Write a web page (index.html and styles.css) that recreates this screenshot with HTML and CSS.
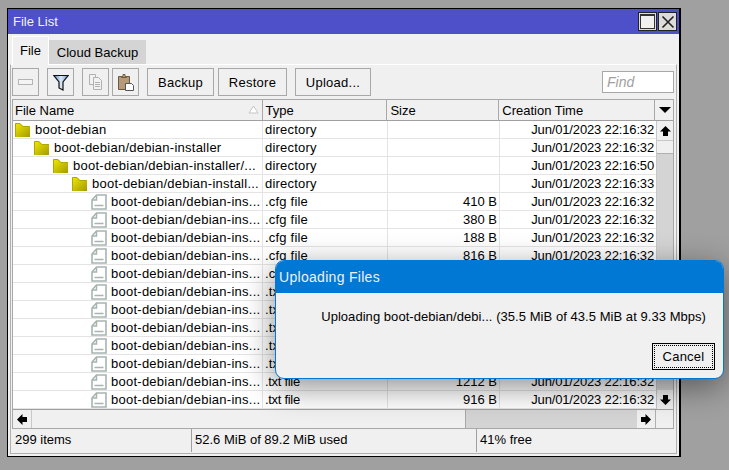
FILE: index.html
```html
<!DOCTYPE html>
<html>
<head>
<meta charset="utf-8">
<title>File List</title>
<link rel="stylesheet" href="styles.css">
</head>
<body>
<svg width="0" height="0" class="defs">
	<defs>
		<linearGradient id="fold" x1="0" y1="0" x2="1" y2="1">
			<stop offset="0" stop-color="#f2ea00"/>
			<stop offset="1" stop-color="#a39a00"/>
		</linearGradient>
		<linearGradient id="funnel" x1="0" y1="0" x2="1" y2="0">
			<stop offset="0" stop-color="#4f86c8"/>
			<stop offset=".5" stop-color="#dfeaf6"/>
			<stop offset="1" stop-color="#5f93d0"/>
		</linearGradient>
		<symbol id="folder" viewBox="0 0 16 16">
			<path d="M0 1h5l3 3h7v11H0z" fill="url(#fold)"/>
			<path d="M.5 15V1.500h4.300l3 3h7" fill="none" stroke="#b0a600"/>
		</symbol>
		<symbol id="file" viewBox="0 0 16 16">
			<path d="M5.500 1h9.500v14H1V6z" fill="#fff" stroke="#a6b5b1" stroke-width="1.600"/>
			<path d="M5.500 1v5H1M3.500 11.500h9" fill="none" stroke="#a6b5b1" stroke-width="1.500"/>
		</symbol>
	</defs>
</svg>
<div class="window">
	<div class="titlebar">
		<span class="title">File List</span>
		<span class="winbtn"><span class="maxbox"></span></span>
		<span class="winbtn">
			<svg width="14" height="14" viewBox="0 0 14 14"><path d="M1.500 1.500l11 11M12.500 1.500l-11 11" stroke="#222" stroke-width="1.600"/></svg>
		</span>
	</div>
	<div class="tabs">
		<div class="tab active">File</div>
		<div class="tab">Cloud Backup</div>
	</div>
	<div class="panel">
		<div class="toolbar">
			<button class="tool">
				<svg width="15" height="7" viewBox="0 0 15 7"><rect x=".5" y=".5" width="14" height="5" fill="#f4f4f4" stroke="#b4b4b4"/></svg>
			</button>
			<button class="tool gap">
				<svg width="16" height="17" viewBox="0 0 16 17"><path d="M.8 1.500h14.400L10 8v8l-4-2V8z" fill="url(#funnel)" stroke="#111" stroke-width="1.200"/></svg>
			</button>
			<button class="tool gap">
				<svg width="16" height="16" viewBox="0 0 16 16" fill="#f2f2f2" stroke="#b0b0b0"><path d="M1.500 .5h6v10h-6z"/><path d="M5.500 3.500h5l3 3v9h-8z"/><path d="M7 8.500h5M7 10.500h5M7 12.500h5"/></svg>
			</button>
			<button class="tool">
				<svg width="16" height="17" viewBox="0 0 16 17"><path d="M.5 2.500h11v13H.5z" fill="#b79a78" stroke="#6b5a48"/><path d="M3.500 3.500v-1h1.500v-2h2v2h1.500v1z" fill="#e0b050" stroke="#6b5a48"/><path d="M7.500 9.500h6l2 2v5h-8z" fill="#fff" stroke="#555"/></svg>
			</button>
			<button class="tool text gap">Backup</button>
			<button class="tool text restore">Restore</button>
			<button class="tool text upload">Upload...</button>
			<div class="find">Find</div>
		</div>
		<div class="grid">
			<div class="head">
				<div class="hcell c-name">File Name<svg class="sort" width="11" height="9" viewBox="0 0 11 9"><path d="M5.500 1l4.500 7H1z" fill="#fff" stroke="#c4c4c4"/></svg></div>
				<div class="hcell c-type">Type</div>
				<div class="hcell c-size">Size</div>
				<div class="hcell c-time">Creation Time</div>
				<div class="hcell c-menu"><span class="tri-down"></span></div>
			</div>
			<div class="body">
				<div class="rows">
					<div class="row"><div class="c-name l0"><svg class="ic"><use href="#folder"/></svg>boot-debian</div><div class="c-type">directory</div><div class="c-size"></div><div class="c-time">Jun/01/2023 22:16:32</div></div>
					<div class="row"><div class="c-name l1"><svg class="ic"><use href="#folder"/></svg>boot-debian/debian-installer</div><div class="c-type">directory</div><div class="c-size"></div><div class="c-time">Jun/01/2023 22:16:32</div></div>
					<div class="row"><div class="c-name l2"><svg class="ic"><use href="#folder"/></svg>boot-debian/debian-installer/...</div><div class="c-type">directory</div><div class="c-size"></div><div class="c-time">Jun/01/2023 22:16:50</div></div>
					<div class="row"><div class="c-name l3"><svg class="ic"><use href="#folder"/></svg>boot-debian/debian-install...</div><div class="c-type">directory</div><div class="c-size"></div><div class="c-time">Jun/01/2023 22:16:33</div></div>
					<div class="row"><div class="c-name l4"><svg class="ic"><use href="#file"/></svg>boot-debian/debian-ins...</div><div class="c-type">.cfg file</div><div class="c-size">410 B</div><div class="c-time">Jun/01/2023 22:16:32</div></div>
					<div class="row"><div class="c-name l4"><svg class="ic"><use href="#file"/></svg>boot-debian/debian-ins...</div><div class="c-type">.cfg file</div><div class="c-size">380 B</div><div class="c-time">Jun/01/2023 22:16:32</div></div>
					<div class="row"><div class="c-name l4"><svg class="ic"><use href="#file"/></svg>boot-debian/debian-ins...</div><div class="c-type">.cfg file</div><div class="c-size">188 B</div><div class="c-time">Jun/01/2023 22:16:32</div></div>
					<div class="row"><div class="c-name l4"><svg class="ic"><use href="#file"/></svg>boot-debian/debian-ins...</div><div class="c-type">.cfg file</div><div class="c-size">816 B</div><div class="c-time">Jun/01/2023 22:16:32</div></div>
					<div class="row"><div class="c-name l4"><svg class="ic"><use href="#file"/></svg>boot-debian/debian-ins...</div><div class="c-type cut">.c</div><div class="c-size"></div><div class="c-time"></div></div>
					<div class="row"><div class="c-name l4"><svg class="ic"><use href="#file"/></svg>boot-debian/debian-ins...</div><div class="c-type cut">.tx</div><div class="c-size"></div><div class="c-time"></div></div>
					<div class="row"><div class="c-name l4"><svg class="ic"><use href="#file"/></svg>boot-debian/debian-ins...</div><div class="c-type cut">.tx</div><div class="c-size"></div><div class="c-time"></div></div>
					<div class="row"><div class="c-name l4"><svg class="ic"><use href="#file"/></svg>boot-debian/debian-ins...</div><div class="c-type cut">.tx</div><div class="c-size"></div><div class="c-time"></div></div>
					<div class="row"><div class="c-name l4"><svg class="ic"><use href="#file"/></svg>boot-debian/debian-ins...</div><div class="c-type cut">.tx</div><div class="c-size"></div><div class="c-time"></div></div>
					<div class="row"><div class="c-name l4"><svg class="ic"><use href="#file"/></svg>boot-debian/debian-ins...</div><div class="c-type cut">.tx</div><div class="c-size"></div><div class="c-time"></div></div>
					<div class="row"><div class="c-name l4"><svg class="ic"><use href="#file"/></svg>boot-debian/debian-ins...</div><div class="c-type tight">.txt file</div><div class="c-size">1212 B</div><div class="c-time">Jun/01/2023 22:16:32</div></div>
					<div class="row"><div class="c-name l4"><svg class="ic"><use href="#file"/></svg>boot-debian/debian-ins...</div><div class="c-type tight">.txt file</div><div class="c-size">916 B</div><div class="c-time">Jun/01/2023 22:16:32</div></div>
				</div>
				<div class="vscroll">
					<div class="arrow">
						<svg width="11" height="10" viewBox="0 0 11 10"><path d="M5.500 0l5.500 5.500H8V10H3V5.500H0z" fill="#000"/></svg>
					</div>
					<div class="vthumb"></div>
					<div class="vtrack"></div>
					<div class="arrow">
						<svg width="11" height="10" viewBox="0 0 11 10"><path d="M5.500 10L11 4.500H8V0H3v4.500H0z" fill="#000"/></svg>
					</div>
				</div>
			</div>
			<div class="hscroll">
				<div class="arrow wide">
					<svg width="10" height="11" viewBox="0 0 10 11"><path d="M0 5.500L5.500 0v3H10v5H5.500v3z" fill="#000"/></svg>
				</div>
				<div class="hthumb"></div>
				<div class="htrack"></div>
				<div class="arrow wide">
					<svg width="10" height="11" viewBox="0 0 10 11"><path d="M10 5.500L4.500 0v3H0v5h4.500v3z" fill="#000"/></svg>
				</div>
				<div class="corner"></div>
			</div>
		</div>
		<div class="status">
			<div class="st st1">299 items</div>
			<div class="st st2">52.6 MiB of 89.2 MiB used</div>
			<div class="st st3">41% free</div>
		</div>
	</div>
</div>

<div class="dialog">
	<div class="dlg-title">Uploading Files</div>
	<div class="dlg-body">
		<div class="dlg-msg">Uploading boot-debian/debi... (35.5 MiB of 43.5 MiB at 9.33 Mbps)</div>
		<div class="dlg-foot"><button class="cancel"><span>Cancel</span></button></div>
	</div>
</div>
</body>
</html>
```

FILE: styles.css
```css
html, body {
	margin: 0;
	height: 470px;
	overflow: hidden;
}
body {
	background-color: #a0a0a0;
	font-family: "Liberation Sans", Arial, sans-serif;
	font-size: 13px;
	color: #000;
	padding: 8px 0 0 7px;
	box-sizing: border-box;
}
.defs {
	display: block;
	height: 0;
}
button {
	font: inherit;
	color: inherit;
	padding: 0;
}

.window {
	width: 674px;
	height: 449px;
	box-sizing: border-box;
	border: 1px solid #000;
	border-width: 1px 2px 1px 1px;
	background-color: #f0f0f0;
	display: flex;
	flex-direction: column;
}

.titlebar {
	height: 25px;
	background-color: #4d50c9;
	color: #f0f0f0;
	display: flex;
	align-items: center;
	padding: 0 2px 0 5px;
	gap: 1px;
	flex: none;
}
.title {
	flex: 1;
}
.winbtn {
	width: 19px;
	height: 19px;
	box-sizing: border-box;
	border: 1px solid #222;
	background-color: #dcdcdc;
	display: flex;
	align-items: center;
	justify-content: center;
}
.maxbox {
	width: 15px;
	height: 15px;
	box-sizing: border-box;
	border: 1px solid #333;
	border-top-width: 2px;
	background-color: #f0f0f0;
}

.tabs {
	height: 30px;
	padding-left: 4px;
	display: flex;
	align-items: flex-end;
	flex: none;
}
.tab {
	height: 24px;
	line-height: 26px;
	width: 97px;
	text-align: center;
	background-color: #d4d4d4;
	letter-spacing: 0.05px;
}
.tab.active {
	height: 29px;
	line-height: 27px;
	width: 37px;
	background-color: #f0f0f0;
	border: 1px solid #fff;
	border-bottom: none;
	box-sizing: border-box;
	margin-bottom: -1px;
	position: relative;
}

.panel {
	flex: 1;
	margin: 0 2px 2px 2px;
	border: 1px solid #b0b0b0;
	border-top-color: #fff;
	display: flex;
	flex-direction: column;
}

.toolbar {
	height: 28px;
	margin-top: 3px;
	padding: 0 2px 0 1px;
	display: flex;
	align-items: flex-start;
	gap: 3px;
	flex: none;
}
.tool {
	width: 27px;
	height: 28px;
	box-sizing: border-box;
	background-color: #f0f0f0;
	border: 1px solid #a8a8a8;
	display: flex;
	align-items: center;
	justify-content: center;
}
.tool.gap {
	margin-left: 5px;
}
.tool.text {
	width: 67px;
	letter-spacing: 0.25px;
}
.tool.restore {
	width: 69px;
	margin-left: 1px;
}
.tool.upload {
	width: 76px;
	margin-left: 5px;
}
.find {
	margin: 3px 0 0 auto;
	width: 72px;
	height: 22px;
	box-sizing: border-box;
	border: 1px solid #a8a8a8;
	background-color: #fff;
	color: #a0a0a0;
	font-style: italic;
	font-size: 14px;
	line-height: 20px;
	padding-left: 4px;
}

.grid {
	margin: 3px 2px 0 1px;
	border: 1px solid #a8a8a8;
	flex: none;
}
.head {
	display: flex;
	height: 20px;
	border-bottom: 1px solid #a0a0a0;
}
.c-name { width: 250px; }
.c-type { width: 125px; }
.c-size { width: 112px; }
.c-time { width: 156px; }
.c-menu { width: 18px; }
.hcell {
	box-sizing: border-box;
	line-height: 21px;
	padding-left: 2px;
	border-right: 1px solid #a8a8a8;
	position: relative;
}
.hcell.c-type, .hcell.c-size, .hcell.c-time {
	padding-left: 3px;
}
.hcell.c-menu {
	border-right: none;
	display: flex;
	align-items: center;
	justify-content: center;
}
.sort {
	position: absolute;
	right: 3px;
	top: 5px;
}
.tri-down {
	border-left: 6px solid transparent;
	border-right: 6px solid transparent;
	border-top: 6px solid #000;
}

.body {
	display: flex;
	background-color: #fff;
}
.rows {
	width: 643px;
}
.row {
	display: flex;
	height: 18px;
	box-sizing: border-box;
	border-bottom: 1px solid #e4e4e4;
	line-height: 17px;
}
.row > div {
	box-sizing: border-box;
	border-right: 1px solid #e4e4e4;
	white-space: nowrap;
	overflow: hidden;
	display: flex;
	align-items: center;
}
.row .c-name {
	letter-spacing: 0.25px;
}
.row .c-type {
	padding-left: 2px;
	letter-spacing: 0.2px;
}
.row .c-type.tight {
	letter-spacing: -0.3px;
}
.row .c-size {
	justify-content: flex-end;
	padding-right: 2px;
}
.row .c-time {
	justify-content: flex-end;
	padding-right: 2px;
	border-right: none;
	letter-spacing: -0.15px;
}
.l0 { padding-left: 2px; }
.l1 { padding-left: 21px; }
.l2 { padding-left: 40px; }
.l3 { padding-left: 59px; }
.l4 { padding-left: 78px; }
.ic {
	width: 16px;
	height: 16px;
	margin-right: 4px;
	flex: none;
}

.vscroll {
	width: 18px;
	display: flex;
	flex-direction: column;
	background-color: #d4d4d4;
	border-left: 1px solid #c8c8c8;
	box-sizing: border-box;
}
.arrow {
	height: 19px;
	background-color: #f0f0f0;
	display: flex;
	align-items: center;
	justify-content: center;
	flex: none;
}
.vthumb {
	height: 12px;
	background-color: #f0f0f0;
	border-top: 1px solid #c8c8c8;
	border-bottom: 1px solid #b0b0b0;
}
.vtrack {
	flex: 1;
}

.hscroll {
	display: flex;
	height: 18px;
	border-top: 1px solid #a0a0a0;
	background-color: #d4d4d4;
}
.arrow.wide {
	width: 18px;
	height: 18px;
}
.hthumb {
	width: 435px;
	background-color: #f0f0f0;
	border-left: 1px solid #c8c8c8;
	border-right: 1px solid #a8a8a8;
	box-sizing: border-box;
}
.htrack {
	width: 171px;
}
.corner {
	flex: 1;
	background-color: #f0f0f0;
	border-left: 1px solid #b0b0b0;
}

.status {
	display: flex;
	height: 23px;
	margin: 0 2px 0 1px;
	line-height: 21px;
	flex: none;
}
.st {
	box-sizing: border-box;
	padding-left: 3px;
	border-right: 1px solid #a0a0a0;
}
.st1 { width: 180px; }
.st2 { width: 285px; padding-left: 3px; }
.st3 { flex: 1; border-right: none; }

.dialog {
	position: absolute;
	left: 275px;
	top: 260px;
	width: 449px;
	height: 119px;
	box-sizing: border-box;
	border: 1px solid #0078d4;
	border-radius: 9px;
	overflow: hidden;
	background-color: #f0f0f0;
	display: flex;
	flex-direction: column;
	box-shadow: 0 8px 32px rgba(0, 0, 0, 0.45);
}
.dlg-title {
	height: 32px;
	background-color: #0078d4;
	color: #f0f0f0;
	font-size: 14px;
	letter-spacing: 0.3px;
	line-height: 33px;
	padding-left: 3px;
	flex: none;
}
.dlg-body {
	flex: 1;
	display: flex;
	flex-direction: column;
	padding: 0 8px 8px 0;
}
.dlg-msg {
	margin-top: 16px;
	text-align: right;
	padding-right: 9px;
	line-height: 15px;
	letter-spacing: 0.05px;
}
.dlg-foot {
	margin-top: auto;
	display: flex;
	justify-content: flex-end;
}
.cancel {
	width: 63px;
	height: 27px;
	box-sizing: border-box;
	border: 1px solid #000;
	background-color: #f0f0f0;
	padding: 1px;
	letter-spacing: 0.25px;
}
.cancel span {
	display: block;
	height: 100%;
	line-height: 22px;
	border: 1px dotted #000;
	box-sizing: border-box;
}
```
